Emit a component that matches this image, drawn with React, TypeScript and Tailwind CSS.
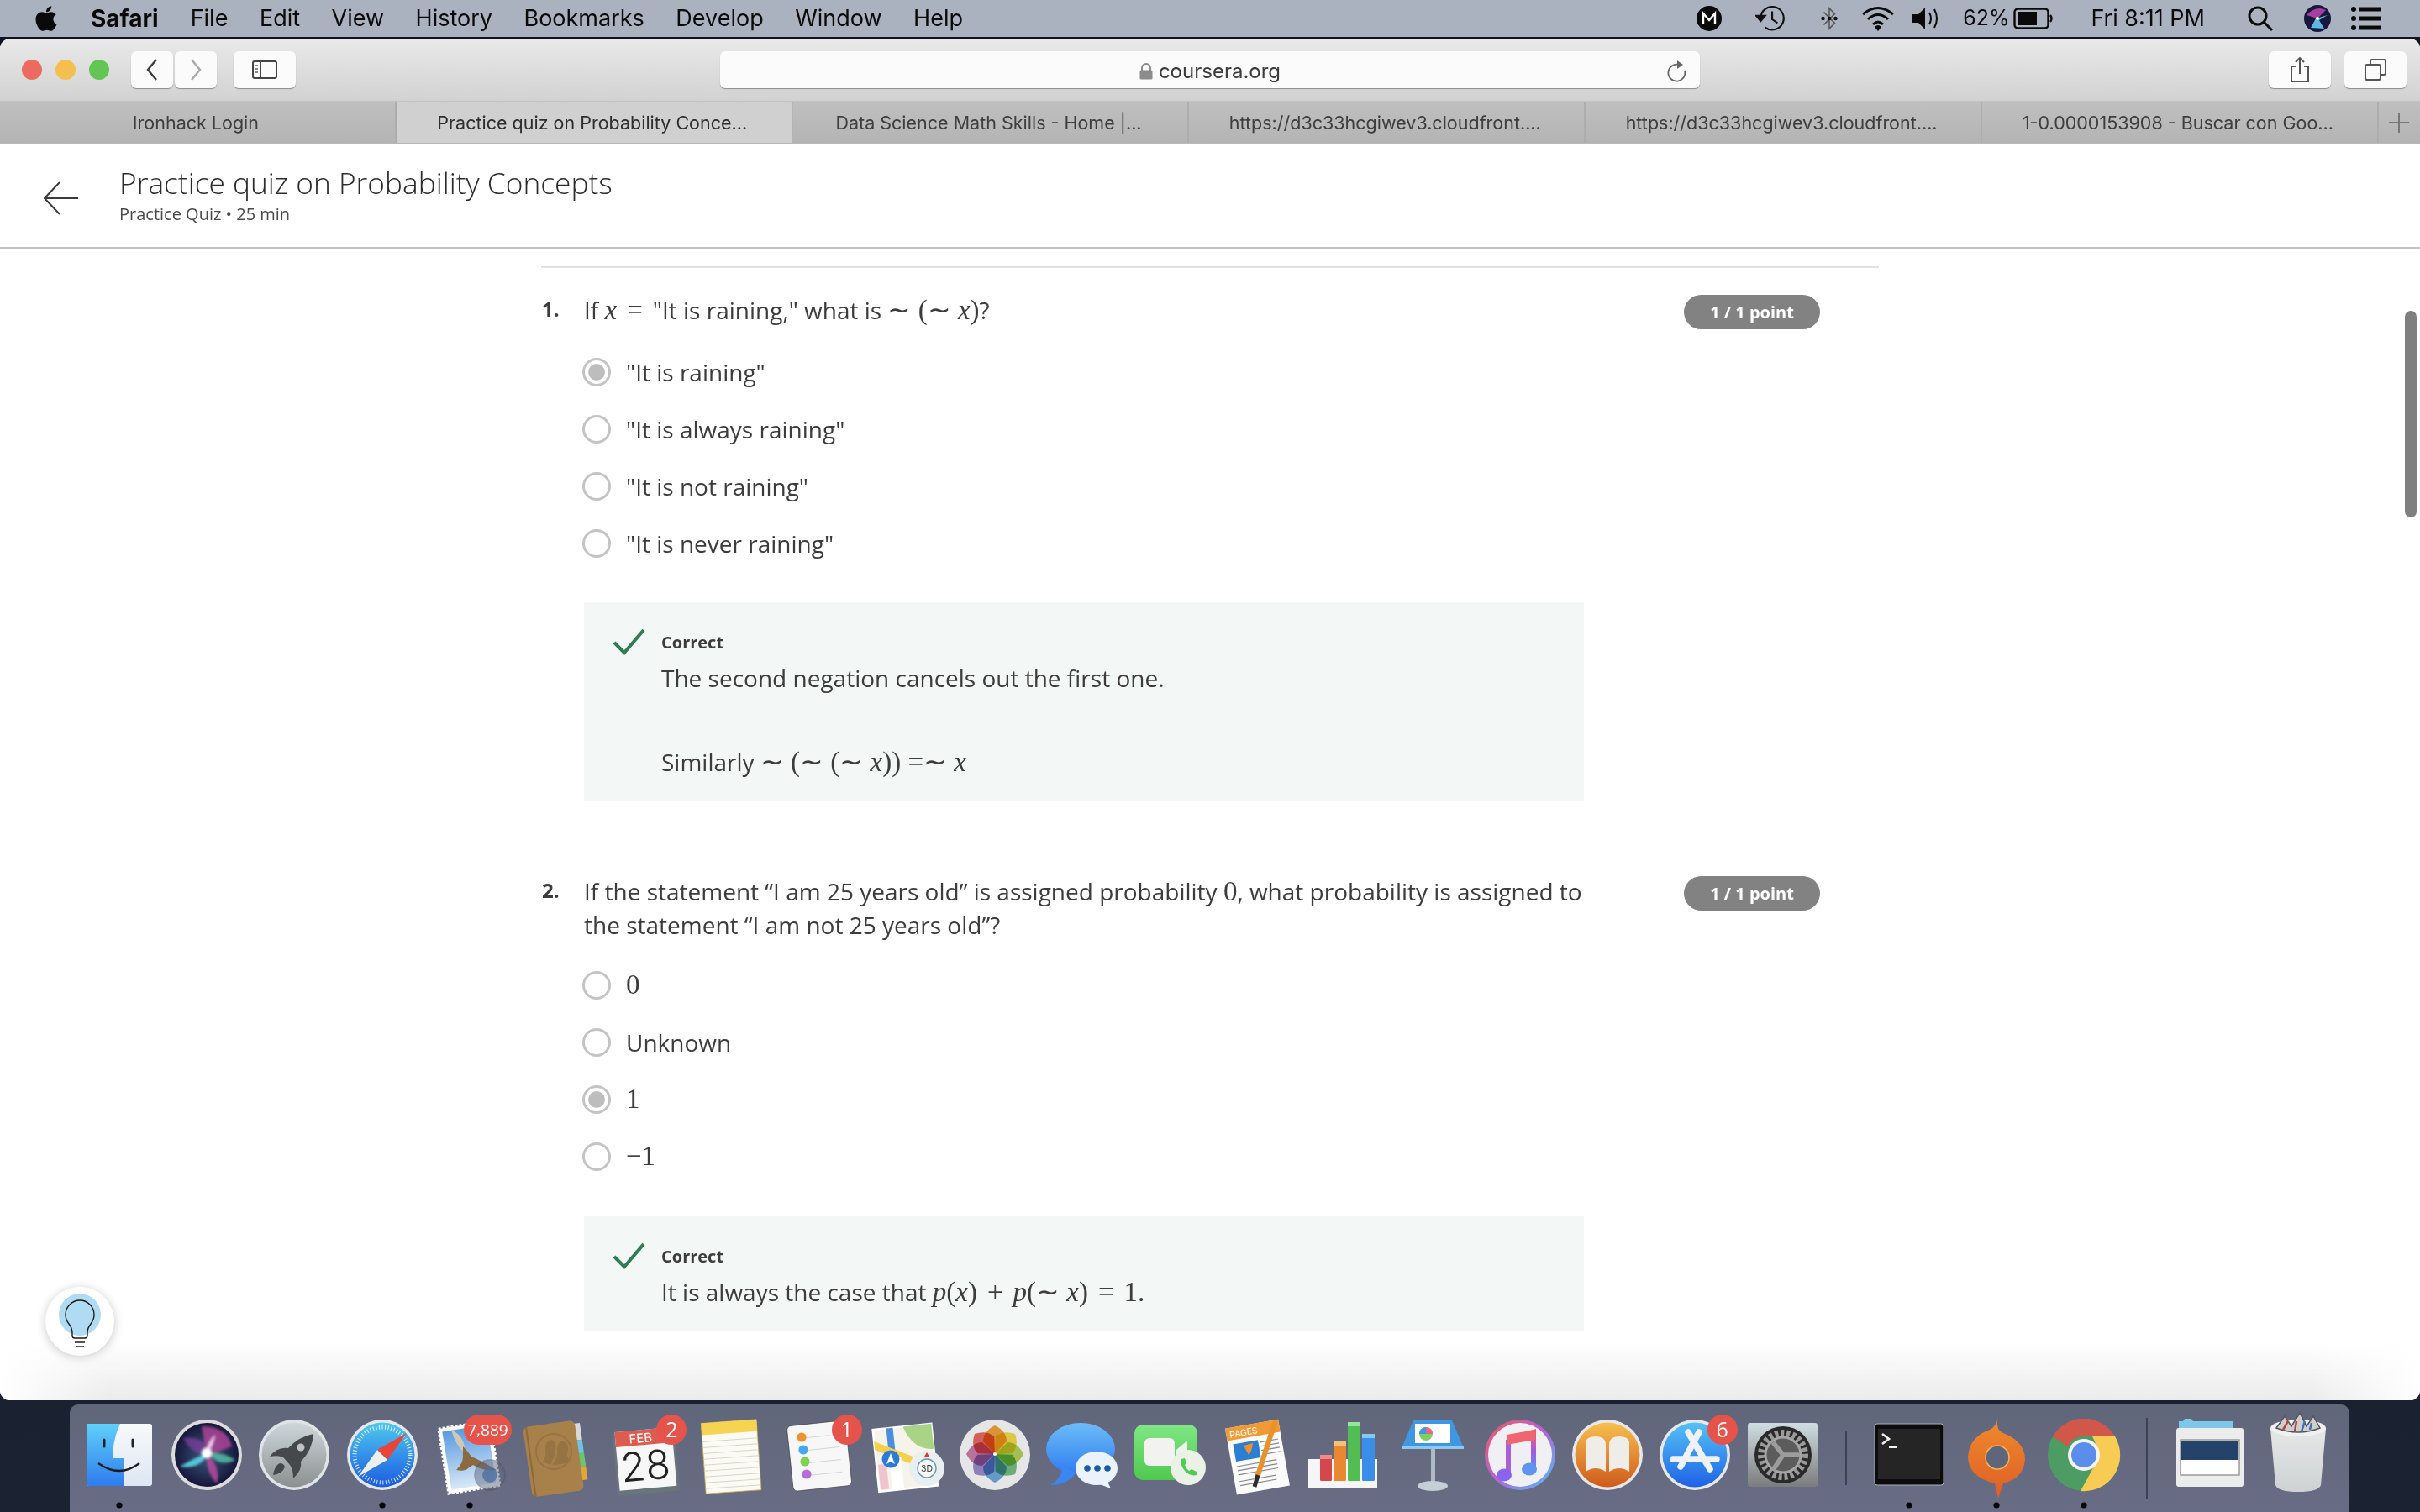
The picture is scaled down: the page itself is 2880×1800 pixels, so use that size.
import type { ReactNode } from 'react'
import { FaApple } from 'react-icons/fa'

const serif = 'font-["Liberation_Serif",serif]'

const M = ({ children }: { children: ReactNode }) => <span className={`${serif} text-[33px]`}>{children}</span>
const I = ({ children }: { children: ReactNode }) => <span className={`${serif} italic text-[33px]`}>{children}</span>
const Op = ({ children }: { children: ReactNode }) => <span className={`${serif} mx-[12px] text-[33px]`}>{children}</span>

const Radio = ({ on }: { on?: boolean }) => (
  <span className="flex h-[34px] w-[34px] shrink-0 items-center justify-center rounded-full border-[3px] border-[#c4c4c4] bg-white">
    {on && <span className="h-[20px] w-[20px] rounded-full bg-[#bdbdbd]" />}
  </span>
)

const Option = ({ on, children }: { on?: boolean; children: ReactNode }) => (
  <div className="-ml-[2px] flex h-[68px] items-center gap-[18px] text-[28px] text-[#3c3c3c]">
    <Radio on={on} />
    <span>{children}</span>
  </div>
)

const Pill = () => (
  <div className="mt-[2px] flex h-[41px] w-[162px] items-center justify-center rounded-full bg-[#828282] text-[20px] font-bold text-white">
    1 / 1 point
  </div>
)

const Correct = ({ className, children }: { className: string; children: ReactNode }) => (
  <div className={`flex w-[1190px] bg-[#f3f8f6] pl-[35px] ${className}`}>
    <svg viewBox="0 0 38 32" className="mt-[31px] h-[32px] w-[38px] shrink-0" fill="none" stroke="#2f7d54" strokeWidth="4">
      <path d="M1 17 L13 29 L36 2" />
    </svg>
    <div className="ml-[19px] pt-[32px]">
      <div className="text-[20px] leading-[32px] font-bold text-[#3c3c3c]">Correct</div>
      <div className="mt-[6px] text-[28px] leading-[40px] text-[#3c3c3c]">{children}</div>
    </div>
  </div>
)

const Question = ({ n, children }: { n: number; children: ReactNode }) => (
  <div className="flex">
    <div className="w-[59px] pt-[1px] pl-[9px] text-[24px] leading-[36px] font-bold text-[#3c3c3c]">{n}.</div>
    <div className="w-[1190px] text-[28px] leading-[40px] text-[#3c3c3c]">{children}</div>
    <div className="ml-[119px]">
      <Pill />
    </div>
  </div>
)

const Tab = ({ label, active }: { label: string; active?: boolean }) => (
  <div
    className={`flex h-[48px] w-[471.8px] items-center justify-center border-r-2 pr-[4px] text-[21.5px] ${
      active ? 'border-[#b4b4b4] bg-[#d0d0d0] text-[#2e2e2e]' : 'border-[#adadad] text-[#3e3e3e]'
    }`}
  >
    {label}
  </div>
)

const ToolBtn = ({ className, children }: { className: string; children: ReactNode }) => (
  <div className={`flex h-[44px] items-center justify-center rounded-[6px] bg-[#fbfbfb] shadow-[0_1px_1px_rgba(0,0,0,0.35)] ${className}`}>
    {children}
  </div>
)

const Badge = ({ text, wide }: { text: string; wide?: boolean }) => (
  <div
    className={`absolute top-[12px] right-[2px] flex h-[36px] items-center justify-center rounded-full bg-[#e5534b] text-white ${
      wide ? 'w-[57px] text-[19px]' : 'w-[36px] text-[25px]'
    }`}
  >
    {text}
  </div>
)

const DockIcon = ({ children, dot, badge, wide }: { children: ReactNode; dot?: boolean; badge?: string; wide?: boolean }) => (
  <div className="relative h-[128px] w-[104.2px] shrink-0">
    <svg viewBox="0 0 104 128" className="h-[128px] w-[104px]">
      {children}
      {dot && <circle cx="52" cy="120" r="3.6" fill="#050505" />}
    </svg>
    {badge && <Badge text={badge} wide={wide} />}
  </div>
)

const Sep = ({ className }: { className: string }) => (
  <div className="flex h-[128px] w-[46px] shrink-0 justify-center">
    <div className={`w-[2px] bg-[#3c4254] ${className}`} />
  </div>
)

const Defs = () => (
  <svg className="absolute h-0 w-0">
    <defs>
      <filter id="soft"><feGaussianBlur stdDeviation="1.6" /></filter>
      <linearGradient id="finderL" x1="0" y1="0" x2="0" y2="1"><stop offset="0" stopColor="#5fd0fb" /><stop offset="1" stopColor="#2e7cee" /></linearGradient>
      <linearGradient id="finderR" x1="0" y1="0" x2="0" y2="1"><stop offset="0" stopColor="#f8f9fa" /><stop offset="1" stopColor="#dde7f3" /></linearGradient>
      <linearGradient id="grayDisc" x1="0" y1="0" x2="0" y2="1"><stop offset="0" stopColor="#cdd8da" /><stop offset="1" stopColor="#8c9091" /></linearGradient>
      <linearGradient id="safari" x1="0" y1="0" x2="0" y2="1"><stop offset="0" stopColor="#4ec8f0" /><stop offset="1" stopColor="#1c5be0" /></linearGradient>
      <radialGradient id="siri"><stop offset="0" stopColor="#3d5a80" /><stop offset="1" stopColor="#16163a" /></radialGradient>
      <linearGradient id="sky" x1="0" y1="0" x2="0" y2="1"><stop offset="0" stopColor="#5a9be0" /><stop offset="1" stopColor="#d8e8f6" /></linearGradient>
      <linearGradient id="msg" x1="0" y1="0" x2="0" y2="1"><stop offset="0" stopColor="#6cbcf8" /><stop offset="1" stopColor="#2f7cf0" /></linearGradient>
      <linearGradient id="ft" x1="0" y1="0" x2="0" y2="1"><stop offset="0" stopColor="#7fe785" /><stop offset="1" stopColor="#50c84e" /></linearGradient>
      <linearGradient id="books" x1="0" y1="0" x2="0" y2="1"><stop offset="0" stopColor="#f6bf4f" /><stop offset="1" stopColor="#cf5a1c" /></linearGradient>
      <linearGradient id="store" x1="0" y1="0" x2="0" y2="1"><stop offset="0" stopColor="#55c1f6" /><stop offset="1" stopColor="#1f62e6" /></linearGradient>
      <linearGradient id="itunes" x1="0" y1="0" x2="1" y2="1"><stop offset="0" stopColor="#f0595e" /><stop offset="0.5" stopColor="#b463d6" /><stop offset="1" stopColor="#4cc4f5" /></linearGradient>
      <linearGradient id="note" x1="0" y1="0" x2="0" y2="1"><stop offset="0" stopColor="#ef5c66" /><stop offset="0.5" stopColor="#a15be0" /><stop offset="1" stopColor="#5f8cf0" /></linearGradient>
      <linearGradient id="prefs" x1="0" y1="0" x2="0" y2="1"><stop offset="0" stopColor="#cfdde2" /><stop offset="1" stopColor="#7c7c7c" /></linearGradient>
      <linearGradient id="origin" x1="0" y1="0" x2="0" y2="1"><stop offset="0" stopColor="#f08a2c" /><stop offset="1" stopColor="#dd5f26" /></linearGradient>
      <linearGradient id="trash" x1="0" y1="0" x2="0" y2="1"><stop offset="0" stopColor="#e6e8e8" /><stop offset="1" stopColor="#cfd2d2" /></linearGradient>
    </defs>
  </svg>
)

const petals = ['#f0a53a', '#f6dc4d', '#b7d35c', '#76bf86', '#6fabdc', '#9a8fcb', '#cc80ad', '#e76a62']

const Dock = () => (
  <div className="ml-[83px] mt-[5px] flex h-[128px] w-[2713px] rounded-t-[10px] bg-gradient-to-b from-[#60667a] to-[#686d85] pl-[7px]">
    {/* finder */}
    <DockIcon dot>
      <rect x="13" y="23" width="78" height="74" rx="3" fill="url(#finderR)" />
      <path d="M16 23 H53 C47 36 44 50 44 64 H57 V97 H16 Q13 97 13 94 V26 Q13 23 16 23Z" fill="url(#finderL)" />
      <path d="M34 42 V50 M68 42 V50" stroke="#222" strokeWidth="3" strokeLinecap="round" />
      <path d="M27 70 Q52 88 76 70" stroke="#1d1d1d" strokeWidth="2.2" fill="none" />
    </DockIcon>
    {/* siri */}
    <DockIcon>
      <circle cx="52" cy="60" r="42" fill="#dcdcdc" />
      <circle cx="52" cy="60" r="38" fill="url(#siri)" />
      <g filter="url(#soft)">
        <path d="M24 40 Q50 36 56 60 Q36 62 24 40Z" fill="#7c3f9e" opacity=".75" />
        <path d="M46 26 Q76 26 82 50 Q62 58 52 60Z" fill="#b5459b" opacity=".8" />
        <path d="M52 58 Q70 76 64 94 Q50 80 52 58Z" fill="#b94aa0" opacity=".85" />
        <path d="M54 58 Q72 56 86 66 Q68 76 54 58Z" fill="#55c6a8" opacity=".8" />
        <path d="M20 74 Q40 62 54 58 Q44 78 20 74Z" fill="#56d5e4" opacity=".9" />
        <path d="M62 36 Q60 50 52 60 Q50 48 62 36Z" fill="#e8c8e6" />
        <circle cx="52" cy="58" r="6" fill="#fff" />
      </g>
    </DockIcon>
    {/* launchpad */}
    <DockIcon>
      <circle cx="52" cy="60" r="42" fill="#e0e4e4" />
      <circle cx="52" cy="60" r="38.5" fill="url(#grayDisc)" />
      <path d="M75 35 Q74 54 60 68 Q62 78 51 88 Q51 78 47 72 L40 64 Q36 60 23 62 Q32 50 45 52 Q58 38 75 35Z" fill="#46494b" />
      <path d="M33 71 Q38 68 41 74 Q39 82 27 84 Q28 76 33 71Z" fill="#46494b" />
      <circle cx="60" cy="51" r="4.5" fill="#bfc4c4" />
    </DockIcon>
    {/* safari */}
    <DockIcon dot>
      <circle cx="52" cy="60" r="42" fill="#e6e8ea" />
      <circle cx="52" cy="60" r="38.5" fill="url(#safari)" />
      <circle cx="52" cy="60" r="33" fill="none" stroke="#fff" strokeWidth="5" strokeDasharray="1 2.6" opacity=".85" />
      <path d="M81 34 L46 54 L58 66Z" fill="#ea4339" />
      <path d="M23 86 L46 54 L58 66Z" fill="#eee" />
    </DockIcon>
    {/* mail */}
    <DockIcon dot badge="7,889" wide>
      <g transform="rotate(-9 50 60)">
        <rect x="20" y="24" width="62" height="78" fill="#fff" stroke="#fff" strokeWidth="3" strokeDasharray="3 2" />
        <rect x="24" y="28" width="54" height="70" fill="url(#sky)" />
      </g>
      <path d="M30 30 Q44 36 46 52 L44 56 Q34 46 30 30Z" fill="#cfc8b6" />
      <path d="M44 50 Q50 56 54 62 Q68 68 84 78 Q68 80 56 72 L50 76 Q46 80 36 78 Q44 70 44 62Z" fill="#8a6a3e" />
      <circle cx="76" cy="84" r="18" fill="#5e6880" opacity=".5" stroke="#4c5468" strokeWidth="1.5" />
      <circle cx="76" cy="84" r="9" fill="#4f6f9e" opacity=".8" />
    </DockIcon>
    {/* contacts */}
    <DockIcon>
      <g transform="rotate(-8 52 60)">
        <rect x="72" y="26" width="12" height="20" fill="#d9d9d9" />
        <rect x="72" y="46" width="12" height="16" fill="#71c3e6" />
        <rect x="72" y="62" width="12" height="16" fill="#6cc66e" />
        <rect x="72" y="78" width="12" height="16" fill="#dda83a" />
        <rect x="16" y="22" width="62" height="84" rx="6" fill="#a8814a" />
        <rect x="19" y="22" width="2" height="84" fill="#8d6a39" />
      </g>
      <circle cx="48" cy="56" r="21" fill="none" stroke="#957343" strokeWidth="2" />
      <path d="M35 68 Q40 60 38 54 Q38 42 46 42 Q52 44 50 56 Q49 62 44 72Z" fill="#957343" />
      <path d="M46 72 Q54 62 52 52 Q54 42 60 44 Q68 48 64 58 Q64 64 68 68 Q58 72 46 72Z" fill="#957343" />
    </DockIcon>
    {/* calendar */}
    <DockIcon badge="2">
      <g transform="rotate(-5 52 60)">
        <rect x="16" y="32" width="74" height="74" fill="#68757a" />
        <rect x="19" y="30" width="68" height="70" fill="#f7f7f7" />
        <rect x="19" y="30" width="68" height="18" fill="#dc5c52" />
        <text x="49" y="45" fontSize="15" fill="#fff" textAnchor="middle" fontFamily="Inter, sans-serif">FEB</text>
        <text x="52" y="90" fontSize="48" fill="#222" textAnchor="middle" fontFamily="Inter, sans-serif" fontWeight="300">28</text>
      </g>
    </DockIcon>
    {/* notes */}
    <DockIcon>
      <g transform="rotate(-4 52 60)">
        <rect x="18" y="20" width="66" height="84" fill="#fbfbf4" stroke="#c9a54c" strokeWidth=".8" />
        <rect x="18" y="20" width="66" height="14" fill="#f6d350" />
        <path d="M18 42H84M18 49H84M18 56H84M18 63H84M18 70H84M18 77H84M18 84H84M18 91H84M18 98H84" stroke="#d6d6d0" strokeWidth="1" />
      </g>
    </DockIcon>
    {/* reminders */}
    <DockIcon badge="1">
      <g transform="rotate(-6 52 60)">
        <rect x="16" y="22" width="70" height="78" rx="5" fill="#f7f7f7" stroke="#333" strokeWidth=".6" />
        <path d="M36 38H66M36 53H76M36 68H76M36 83H76" stroke="#d4d4d4" strokeWidth="1" />
      </g>
      <circle cx="30" cy="39" r="5.6" fill="#f0932e" />
      <circle cx="32" cy="54" r="5.6" fill="#45a8f2" />
      <circle cx="34" cy="68" r="5.6" fill="#7dd24f" />
      <circle cx="36" cy="83" r="5.6" fill="#b96bd6" />
    </DockIcon>
    {/* maps */}
    <DockIcon>
      <g transform="rotate(-6 52 60)">
        <rect x="14" y="26" width="70" height="74" fill="#f5f3ea" stroke="#fff" strokeWidth="2.5" />
        <path d="M50 26 H84 V56 Q60 56 50 26Z" fill="#a9d386" />
        <rect x="30" y="26" width="8" height="40" fill="#4a8fdc" />
        <path d="M14 40 L84 76 V86 L14 50Z" fill="#f5d04e" />
        <rect x="16" y="68" width="10" height="30" fill="#f0c4cf" />
        <rect x="30" y="62" width="14" height="38" fill="#fff" />
      </g>
      <circle cx="32" cy="65" r="10.5" fill="#2d7bd8" />
      <path d="M32 58 L37 71 L32 68 L27 71Z" fill="#fff" />
      <circle cx="75" cy="76" r="21" fill="#e9eff1" />
      <circle cx="75" cy="76" r="11" fill="#f6f8f8" stroke="#6a98b6" strokeWidth="1.4" />
      <text x="75" y="80" fontSize="10.5" textAnchor="middle" fill="#333" fontFamily="Inter, sans-serif">3D</text>
      <path d="M75 57 L78 62 H72Z" fill="#d8392d" />
    </DockIcon>
    {/* photos */}
    <DockIcon>
      <circle cx="52" cy="60" r="42" fill="#e6e6e6" />
      {petals.map((c, i) => (
        <g key={c} transform={`rotate(${i * 45} 52 59)`} className="mix-blend-multiply">
          <path d="M52 59 L38 44 Q38 32 52 25 Q66 32 66 44Z" fill={c} />
        </g>
      ))}
      <circle cx="52" cy="59" r="2" fill="#fff" />
    </DockIcon>
    {/* messages */}
    <DockIcon>
      <ellipse cx="50" cy="53" rx="41" ry="31" fill="url(#msg)" />
      <path d="M29 72 Q28 88 14 96 Q34 96 44 82Z" fill="#3a86f2" />
      <ellipse cx="69" cy="76" rx="25" ry="20" fill="#eaf2fa" />
      <path d="M80 88 L86 100 L70 94Z" fill="#eaf2fa" />
      <circle cx="58" cy="76" r="3.8" fill="#1d5aa6" /><circle cx="70" cy="76" r="3.8" fill="#1d5aa6" /><circle cx="82" cy="76" r="3.8" fill="#1d5aa6" />
    </DockIcon>
    {/* facetime */}
    <DockIcon>
      <rect x="10" y="24" width="75" height="66" rx="10" fill="url(#ft)" />
      <rect x="22" y="40" width="36" height="33" rx="6" fill="#f2f2f0" />
      <path d="M60 54 L73 43 V70 L60 60Z" fill="#eef3ec" />
      <circle cx="74" cy="75" r="21" fill="#ecf1e8" />
      <path d="M66 65 Q64 72 70 79 Q76 86 84 84 L84 80 L78 77 L75 79 Q71 76 70 72 L72 70 L70 64Z" fill="#52c855" />
    </DockIcon>
    {/* pages */}
    <DockIcon>
      <g transform="rotate(-10 50 60)">
        <rect x="20" y="23" width="64" height="80" fill="#fbfbfb" />
        <rect x="20" y="23" width="64" height="15" fill="#f19a33" />
        <text x="24" y="35" fontSize="10.5" fill="#fff" fontFamily="Inter, sans-serif">PAGES</text>
        <rect x="26" y="43" width="30" height="21" fill="#2c7ed2" />
        <path d="M58 46H80M58 51H80M58 56H80M58 61H80M26 70H74M26 75H74M26 80H74M26 88H70M26 93H70" stroke="#888" strokeWidth="1.2" />
      </g>
      <path d="M36 49 L47 46 Q46 56 42 60Z" fill="#f0902c" />
      <path d="M73 22 L53 84" stroke="#e8922c" strokeWidth="6" strokeLinecap="round" />
      <path d="M53 84 L49 98" stroke="#2c2c2c" strokeWidth="5" />
    </DockIcon>
    {/* numbers */}
    <DockIcon>
      <rect x="8" y="65" width="82" height="35" fill="#f6f6f6" />
      <rect x="22" y="60" width="14" height="31" rx="1.5" fill="#d4474d" />
      <rect x="22" y="60" width="14" height="5" fill="#ef8a88" />
      <rect x="38" y="44" width="15" height="47" rx="1.5" fill="#e98830" />
      <rect x="38" y="44" width="15" height="5" fill="#f5c177" />
      <rect x="55" y="21" width="15" height="70" rx="1.5" fill="#52bd52" />
      <rect x="55" y="21" width="15" height="5" fill="#97e49a" />
      <rect x="72" y="35" width="15" height="56" rx="1.5" fill="#3a8eea" />
      <rect x="72" y="35" width="15" height="5" fill="#82caf5" />
    </DockIcon>
    {/* keynote */}
    <DockIcon>
      <path d="M29 19 H75 L89 52 H15Z" fill="#3f97e2" />
      <rect x="15" y="50" width="74" height="3" fill="#8fc8f2" />
      <rect x="31" y="23" width="42" height="23" fill="#fff" />
      <circle cx="44" cy="35" r="8" fill="#7ccf63" />
      <path d="M44 35 V27 A8 8 0 0 1 52 35Z" fill="#e6668c" />
      <path d="M44 35 H36 A8 8 0 0 1 44 27Z" fill="#3f97e2" />
      <rect x="50" y="53" width="5" height="42" fill="#aebbc4" />
      <ellipse cx="52" cy="97" rx="18" ry="6" fill="#c4d0d6" />
    </DockIcon>
    {/* itunes */}
    <DockIcon>
      <circle cx="52" cy="60" r="42" fill="url(#itunes)" />
      <circle cx="52" cy="60" r="38" fill="#f0eff4" />
      <path d="M38 42 L68 33 V78" stroke="url(#note)" strokeWidth="6" fill="none" />
      <path d="M38 42 V84" stroke="#a85fd8" strokeWidth="6" />
      <path d="M36 36 L70 30 V42 L36 48Z" fill="#ef6670" />
      <ellipse cx="33" cy="84" rx="9" ry="7.5" fill="#8a64ea" />
      <ellipse cx="63" cy="77" rx="9" ry="7.5" fill="#5f95ee" />
    </DockIcon>
    {/* ibooks */}
    <DockIcon>
      <circle cx="52" cy="60" r="42" fill="#e8e8e8" />
      <circle cx="52" cy="60" r="38.5" fill="url(#books)" />
      <path d="M50 48 Q50 38 38 38 Q28 38 26 44 V80 Q38 72 50 80Z" fill="#f0ece8" />
      <path d="M54 48 Q54 38 66 38 Q76 38 78 44 V80 Q66 72 54 80Z" fill="#f0ece8" />
    </DockIcon>
    {/* app store */}
    <DockIcon badge="6">
      <circle cx="52" cy="60" r="42" fill="#e6e8ea" />
      <circle cx="52" cy="60" r="38.5" fill="url(#store)" />
      <path d="M57 33 L35 74 M44 33 L70 77 M26 65 H78" stroke="#eef2f6" strokeWidth="7.5" strokeLinecap="round" />
    </DockIcon>
    {/* system preferences */}
    <DockIcon>
      <rect x="10" y="22" width="83" height="76" rx="3" fill="url(#prefs)" />
      <circle cx="52" cy="60" r="34" fill="#2a2a2a" />
      <circle cx="52" cy="60" r="26" fill="none" stroke="#9a9a9a" strokeWidth="8" strokeDasharray="4 3" />
      <circle cx="52" cy="60" r="21" fill="#5c5c5c" stroke="#a5a5a5" strokeWidth="3" />
      <path d="M52 60 L40 45 M52 60 L72 60 M52 60 L40 78" stroke="#9c9c9c" strokeWidth="5.5" />
    </DockIcon>
    <Sep className="mt-[32px] h-[64px]" />
    {/* terminal */}
    <DockIcon dot>
      <rect x="11" y="23" width="82" height="73" rx="3" fill="#0c0c0c" stroke="#a8b0b8" strokeWidth="1" />
      <rect x="15" y="29" width="74" height="60" fill="#252525" />
      <path d="M20 35 L28 41 L20 47" stroke="#f0f0f0" strokeWidth="2.6" fill="none" />
      <rect x="28" y="49" width="10" height="3" fill="#f0f0f0" />
    </DockIcon>
    {/* origin */}
    <DockIcon dot>
      <path d="M54 14 Q50 30 60 34 Q86 44 86 66 Q84 88 60 94 L54 112 L50 94 Q18 86 18 62 Q20 38 44 30 Q52 26 54 14Z" fill="url(#origin)" />
      <circle cx="53" cy="63" r="14" fill="#60667a" stroke="#f6b25a" strokeWidth="1.5" />
    </DockIcon>
    {/* chrome */}
    <DockIcon dot>
      <circle cx="52" cy="60" r="43" fill="#4d9c63" />
      <path d="M15 38 A43 43 0 0 1 89 38 H52 Q38 38 33 50Z" fill="#d0574a" />
      <path d="M89 38 A43 43 0 0 1 48 103 L65 72 Q72 56 62 38Z" fill="#f8cb55" />
      <circle cx="52" cy="60" r="19" fill="#f4f4f4" />
      <circle cx="52" cy="60" r="15" fill="#5a8eea" />
    </DockIcon>
    <Sep className="mt-[16px] h-[96px]" />
    {/* preview doc */}
    <DockIcon>
      <path d="M15 20 H20 L22 17 H30 L32 20 H80 V30 H15Z" fill="#7cc7ea" />
      <rect x="12" y="28" width="80" height="70" rx="3" fill="#ececec" />
      <rect x="17" y="42" width="70" height="42" fill="#fff" stroke="#9a9a9a" strokeWidth="1.5" />
      <rect x="18" y="44" width="68" height="22" fill="#24436a" />
    </DockIcon>
    {/* trash */}
    <DockIcon>
      <path d="M19 28 H85 L79 96 Q76 104 52 104 Q28 104 25 96Z" fill="url(#trash)" />
      <ellipse cx="52" cy="28" rx="33" ry="10" fill="#f0f0f0" />
      <path d="M26 28 L36 14 L44 26 L54 10 L62 26 L70 14 L78 28 Q52 38 26 28Z" fill="#cfcfcf" stroke="#555" strokeWidth="1.5" />
      <path d="M34 30 L40 20 M48 32 L50 20" stroke="#b5473f" strokeWidth="2.5" />
      <path d="M56 32 L60 20 M66 30 L68 22" stroke="#3f72b5" strokeWidth="2.5" />
    </DockIcon>
  </div>
)

const MenuBar = () => (
  <div className='flex h-[44px] items-center bg-[#abb2bf] font-["Inter",sans-serif] text-[27px] text-[#0a0a0a]'>
    <FaApple className="ml-[40px] h-[34px] w-[30px] text-[#0a0a0a]" />
    <span className="ml-[38px] text-[28px] font-bold">Safari</span>
    <div className="ml-[38px] flex gap-[37.5px]">
      {['File', 'Edit', 'View', 'History', 'Bookmarks', 'Develop', 'Window', 'Help'].map(m => (
        <span key={m}>{m}</span>
      ))}
    </div>
    <div className="ml-auto flex items-center">
      <svg viewBox="0 0 30 30" className="h-[30px] w-[30px]">
        <circle cx="15" cy="15" r="15" fill="#0a0a0a" />
        <path d="M8 21 V9 L15 17 L22 9 V21" stroke="#fff" strokeWidth="2.4" fill="none" />
      </svg>
      <svg viewBox="0 0 36 32" className="ml-[40px] h-[34px] w-[38px]" fill="none" stroke="#111" strokeWidth="2">
        <path d="M6 16 A13 13 0 1 1 11 26" />
        <path d="M1 13 L6 19 L11 13Z" fill="#111" />
        <path d="M19 8 V17 L25 21" />
      </svg>
      <svg viewBox="0 0 30 34" className="ml-[36px] h-[38px] w-[28px]" fill="none" stroke="#555" strokeWidth="1.6">
        <path d="M8 9 L22 23 L15 30 V4 L22 11 L8 25" />
        <circle cx="7" cy="17" r="2.4" fill="#111" stroke="none" /><circle cx="15" cy="17" r="2.4" fill="#111" stroke="none" /><circle cx="23" cy="17" r="2.4" fill="#111" stroke="none" />
      </svg>
      <svg viewBox="0 0 40 32" className="ml-[24px] h-[32px] w-[40px]" fill="none" stroke="#0a0a0a" strokeWidth="3">
        <path d="M2 11 Q20 -4 38 11" /><path d="M8 17 Q20 6 32 17" /><path d="M14 23 Q20 17 26 23" />
        <path d="M16 26 L20 31 L24 26 Q20 22 16 26Z" fill="#0a0a0a" stroke="none" />
      </svg>
      <svg viewBox="0 0 36 30" className="ml-[20px] h-[30px] w-[36px]" fill="#0a0a0a">
        <path d="M1 10 H8 L16 2 V28 L8 20 H1Z" />
        <path d="M21 8 Q25 15 21 22 M27 4 Q33 15 27 26" fill="none" stroke="#0a0a0a" strokeWidth="2" />
      </svg>
      <span className="ml-[25px] text-[25px]">62%</span>
      <svg viewBox="0 0 48 26" className="ml-[5px] h-[26px] w-[48px]">
        <rect x="1.5" y="1.5" width="40" height="23" rx="4" fill="none" stroke="#0a0a0a" strokeWidth="2.4" />
        <rect x="5" y="5" width="23" height="16" fill="#0a0a0a" />
        <path d="M44 9 Q47 13 44 17" stroke="#0a0a0a" strokeWidth="2.4" fill="none" />
      </svg>
      <span className="ml-[44px]">Fri 8:11 PM</span>
      <svg viewBox="0 0 32 32" className="ml-[50px] h-[32px] w-[32px]" fill="none" stroke="#0a0a0a" strokeWidth="3">
        <circle cx="13" cy="13" r="10" /><path d="M20 20 L30 30" />
      </svg>
      <svg viewBox="0 0 32 32" className="ml-[36px] h-[32px] w-[32px]">
        <circle cx="16" cy="16" r="16" fill="#17183c" />
        <path d="M3 12 Q14 0 26 6 L16 16Z" fill="#a53e9e" />
        <path d="M8 27 L14 16 L28 12 L18 18 L24 28Z" fill="#5fb8e0" />
        <circle cx="16" cy="16" r="2" fill="#fff" />
      </svg>
      <svg viewBox="0 0 36 30" className="ml-[24px] mr-[46px] h-[30px] w-[36px]" fill="#0a0a0a">
        <circle cx="3" cy="4" r="3" /><circle cx="3" cy="15" r="3" /><circle cx="3" cy="26" r="3" />
        <rect x="10" y="1.5" width="26" height="5" /><rect x="10" y="12.5" width="26" height="5" /><rect x="10" y="23.5" width="26" height="5" />
      </svg>
    </div>
  </div>
)

const Toolbar = () => (
  <div className='flex h-[76px] items-center rounded-t-[12px] border-b-2 border-[#c2c2c2] bg-gradient-to-b from-[#e9e9e9] to-[#d2d2d2] pl-[26px] pr-[16px] font-["Inter",sans-serif]'>
    <div className="flex gap-[16px]">
      <div className="h-[24px] w-[24px] rounded-full bg-[#ed6a5e]" />
      <div className="h-[24px] w-[24px] rounded-full bg-[#f5bf4f]" />
      <div className="h-[24px] w-[24px] rounded-full bg-[#62c554]" />
    </div>
    <ToolBtn className="ml-[26px] w-[50px]">
      <svg viewBox="0 0 14 26" className="h-[26px] w-[14px]" fill="none" stroke="#3c3c3c" strokeWidth="2.4"><path d="M12 1 L2 13 L12 25" /></svg>
    </ToolBtn>
    <ToolBtn className="ml-[2px] w-[50px]">
      <svg viewBox="0 0 14 26" className="h-[26px] w-[14px]" fill="none" stroke="#a8a8a8" strokeWidth="2.4"><path d="M2 1 L12 13 L2 25" /></svg>
    </ToolBtn>
    <ToolBtn className="ml-[20px] w-[74px]">
      <svg viewBox="0 0 30 22" className="h-[22px] w-[30px]" fill="none" stroke="#444" strokeWidth="2">
        <rect x="1" y="1" width="28" height="20" rx="2" /><path d="M10 1 V21" />
        <path d="M4 6 H7 M4 10 H7 M4 14 H7" stroke="#888" />
      </svg>
    </ToolBtn>
    <ToolBtn className="ml-[505px] w-[1166px] pt-[3px] text-[24px] text-[#3c3c3c] relative">
      <svg viewBox="0 0 16 20" className="mr-[7px] h-[20px] w-[16px]" fill="#8c8c8c">
        <path d="M3 9 V6 A5 5 0 0 1 13 6 V9" fill="none" stroke="#8c8c8c" strokeWidth="2" />
        <rect x="0.5" y="8.5" width="15" height="11" rx="1.5" />
      </svg>
      coursera.org
      <svg viewBox="0 0 24 26" className="absolute right-[15px] h-[26px] w-[24px]" fill="none" stroke="#666" strokeWidth="1.8">
        <path d="M14 5 A10 10 0 1 0 21 12" />
        <path d="M12 0 L19 5 L12 10Z" fill="#666" stroke="none" />
      </svg>
    </ToolBtn>
    <ToolBtn className="ml-[677px] w-[74px]">
      <svg viewBox="0 0 24 30" className="h-[30px] w-[24px]" fill="none" stroke="#555" strokeWidth="2">
        <path d="M7 11 H2 V29 H22 V11 H17" /><path d="M12 20 V1 M7 6 L12 1 L17 6" />
      </svg>
    </ToolBtn>
    <ToolBtn className="ml-[16px] w-[74px]">
      <svg viewBox="0 0 26 26" className="h-[26px] w-[26px]" fill="none" stroke="#555" strokeWidth="2">
        <rect x="1" y="7" width="18" height="18" rx="2" /><path d="M7 7 V3 Q7 1 9 1 H23 Q25 1 25 3 V17 Q25 19 23 19 H19" />
      </svg>
    </ToolBtn>
  </div>
)

const Tabs = () => (
  <div className='flex h-[50px] border-b-2 border-[#b8b8b8] bg-gradient-to-b from-[#bfbfbf] to-[#b4b4b4] font-["Inter",sans-serif]'>
    <Tab label="Ironhack Login" />
    <Tab label="Practice quiz on Probability Conce..." active />
    <Tab label="Data Science Math Skills - Home |..." />
    <Tab label="https://d3c33hcgiwev3.cloudfront...." />
    <Tab label="https://d3c33hcgiwev3.cloudfront...." />
    <Tab label="1-0.0000153908 - Buscar con Goo..." />
    <div className="flex flex-1 items-center justify-center">
      <svg viewBox="0 0 24 24" className="h-[24px] w-[24px]" stroke="#777" strokeWidth="2"><path d="M12 0 V24 M0 12 H24" /></svg>
    </div>
  </div>
)

const Header = () => (
  <div className="flex h-[124px] items-center border-b-2 border-[#c1c1c1] bg-white pl-[52px]">
    <svg viewBox="0 0 42 40" className="mt-[5px] h-[40px] w-[42px] shrink-0" fill="none" stroke="#3c3c3c" strokeWidth="2">
      <path d="M19 1 L1 20 L19 39 M1 20 H41" />
    </svg>
    <div className="ml-[48px] -mt-[5px]">
      <div className="text-[35.3px] leading-[48px] font-light text-[#2c2c2c]">Practice quiz on Probability Concepts</div>
      <div className="text-[20px] leading-[28px] text-[#4a4a4a]">Practice Quiz • 25 min</div>
    </div>
  </div>
)

const Content = () => (
  <div className="relative flex-1 overflow-hidden bg-white pl-[636px]">
    <div className="ml-[8px] mt-[21px] h-[2px] w-[1592px] bg-[#e1e1e1]" />
    <div className="mt-[30px]">
      <Question n={1}>
        If <I>x</I><Op>=</Op>"It is raining," what is <M>∼ (∼ </M><I>x</I><M>)</M>?
      </Question>
      <div className="ml-[59px] mt-[17px]">
        <Option on>"It is raining"</Option>
        <Option>"It is always raining"</Option>
        <Option>"It is not raining"</Option>
        <Option>"It is never raining"</Option>
      </div>
      <Correct className="ml-[59px] mt-[36px] h-[236px]">
        <div>The second negation cancels out the first one.</div>
        <div className="mt-[60px]">
          Similarly <M>∼ (∼ (∼ </M><I>x</I><M>)) =∼ </M><I>x</I>
        </div>
      </Correct>
    </div>
    <div className="mt-[88px]">
      <Question n={2}>
        If the statement “I am 25 years old” is assigned probability <M>0</M>, what probability is assigned to the statement “I am not 25 years old”?
      </Question>
      <div className="ml-[59px] mt-[18px]">
        <Option><M>0</M></Option>
        <Option>Unknown</Option>
        <Option on><M>1</M></Option>
        <Option><M>−1</M></Option>
      </div>
      <Correct className="ml-[59px] mt-[37px] h-[136px]">
        It is always the case that <I>p</I><M>(</M><I>x</I><M>)</M><Op>+</Op><I>p</I><M>(∼ </M><I>x</I><M>)</M><Op>=</Op><M>1.</M>
      </Correct>
    </div>

    {/* scroll thumb */}
    <div className="absolute top-[74px] right-[4px] h-[246px] w-[14px] rounded-full bg-[#7f7f7f]" />

    {/* hint button */}
    <div className="absolute top-[1236px] left-[54px] flex h-[82px] w-[82px] items-center justify-center rounded-full bg-white shadow-[0_2px_12px_rgba(0,0,0,0.22)]">
      <svg viewBox="0 0 60 70" className="h-[70px] w-[60px]" fill="none" stroke="#1a1a1a" strokeWidth="1.4">
        <circle cx="30" cy="27" r="25" fill="#b0dcf3" stroke="none" />
        <path d="M21 52 V49 Q21 43 17 38 Q13 33 13 27 A17 17 0 0 1 47 27 Q47 33 43 38 Q39 43 39 49 V52 Q39 55 36 55 H24 Q21 55 21 52Z" />
        <path d="M24 60 H36 M25 65 H35" />
      </svg>
    </div>

    {/* dock reflection on the bottom edge */}
    <div className="absolute right-0 bottom-0 left-0 h-[70px] bg-gradient-to-b from-transparent to-[#ebebeb] [mask-image:linear-gradient(to_right,transparent,black_130px,black_2750px,transparent)]" />
  </div>
)

export default function App() {
  return (
    <div className='relative flex h-[1800px] w-[2880px] flex-col overflow-hidden bg-gradient-to-b from-[#0f1420] to-[#1b2232] font-["Open_Sans",sans-serif]'>
      <Defs />
      <MenuBar />
      <div className="mt-[2px] flex h-[1621px] flex-col overflow-hidden rounded-[12px] bg-white">
        <Toolbar />
        <Tabs />
        <Header />
        <Content />
      </div>
      <Dock />
    </div>
  )
}
